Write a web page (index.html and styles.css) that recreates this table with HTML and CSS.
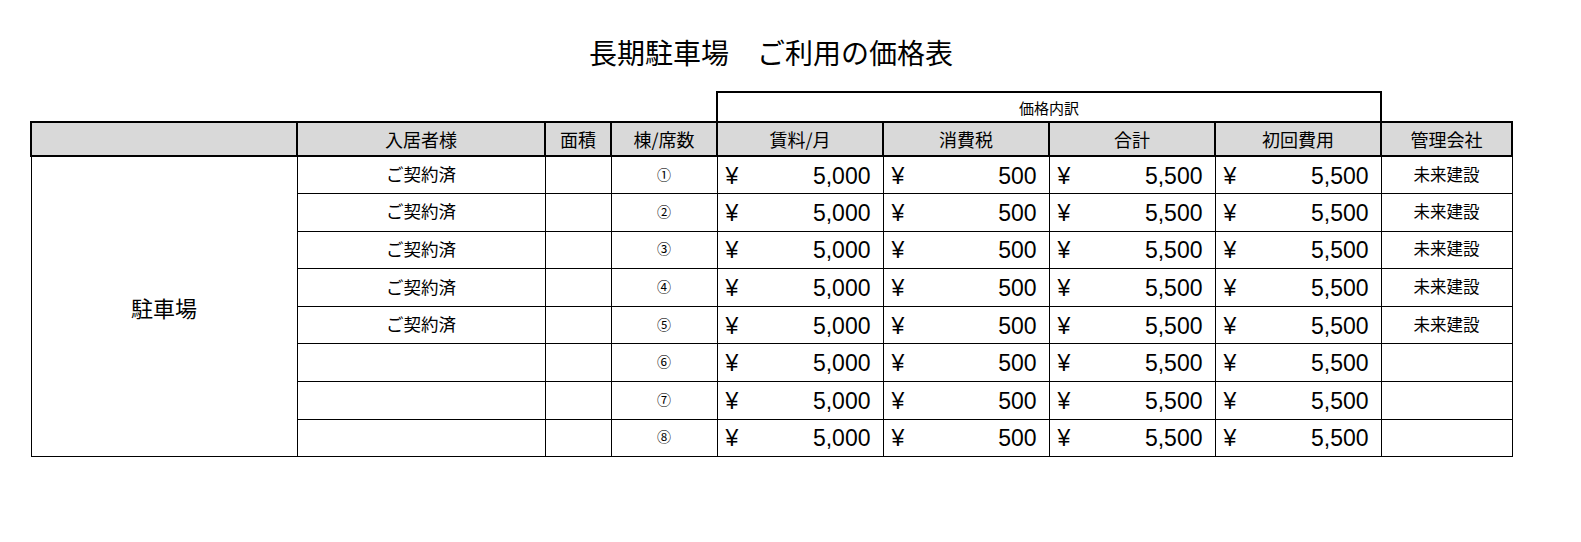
FILE: index.html
```html
<!DOCTYPE html>
<html lang="ja">
<head>
<meta charset="utf-8">
<title>長期駐車場　ご利用の価格表</title>
<link rel="stylesheet" href="styles.css">
</head>
<body>
<div class="page">
  <h1 class="title">長期駐車場　ご利用の価格表</h1>
  <table class="price-table">
    <colgroup>
      <col class="c-area">
      <col class="c-tenant">
      <col class="c-size">
      <col class="c-seat">
      <col class="c-money">
      <col class="c-money">
      <col class="c-money">
      <col class="c-money">
      <col class="c-company">
    </colgroup>
    <tr class="row-group">
      <td class="blank" colspan="4"></td>
      <td class="group" colspan="4">価格内訳</td>
      <td class="blank"></td>
    </tr>
    <tr class="row-head">
      <th></th>
      <th>入居者様</th>
      <th>面積</th>
      <th>棟/席数</th>
      <th>賃料/月</th>
      <th>消費税</th>
      <th>合計</th>
      <th>初回費用</th>
      <th>管理会社</th>
    </tr>
    <tr>
      <td class="area" rowspan="8">駐車場</td>
      <td class="tenant">ご契約済</td><td></td><td class="seat">①</td>
      <td class="money"><div class="m"><span>¥</span><span>5,000</span></div></td>
      <td class="money"><div class="m"><span>¥</span><span>500</span></div></td>
      <td class="money"><div class="m"><span>¥</span><span>5,500</span></div></td>
      <td class="money"><div class="m"><span>¥</span><span>5,500</span></div></td>
      <td class="company">未来建設</td>
    </tr>
    <tr>
      <td class="tenant">ご契約済</td><td></td><td class="seat">②</td>
      <td class="money"><div class="m"><span>¥</span><span>5,000</span></div></td>
      <td class="money"><div class="m"><span>¥</span><span>500</span></div></td>
      <td class="money"><div class="m"><span>¥</span><span>5,500</span></div></td>
      <td class="money"><div class="m"><span>¥</span><span>5,500</span></div></td>
      <td class="company">未来建設</td>
    </tr>
    <tr>
      <td class="tenant">ご契約済</td><td></td><td class="seat">③</td>
      <td class="money"><div class="m"><span>¥</span><span>5,000</span></div></td>
      <td class="money"><div class="m"><span>¥</span><span>500</span></div></td>
      <td class="money"><div class="m"><span>¥</span><span>5,500</span></div></td>
      <td class="money"><div class="m"><span>¥</span><span>5,500</span></div></td>
      <td class="company">未来建設</td>
    </tr>
    <tr>
      <td class="tenant">ご契約済</td><td></td><td class="seat">④</td>
      <td class="money"><div class="m"><span>¥</span><span>5,000</span></div></td>
      <td class="money"><div class="m"><span>¥</span><span>500</span></div></td>
      <td class="money"><div class="m"><span>¥</span><span>5,500</span></div></td>
      <td class="money"><div class="m"><span>¥</span><span>5,500</span></div></td>
      <td class="company">未来建設</td>
    </tr>
    <tr>
      <td class="tenant">ご契約済</td><td></td><td class="seat">⑤</td>
      <td class="money"><div class="m"><span>¥</span><span>5,000</span></div></td>
      <td class="money"><div class="m"><span>¥</span><span>500</span></div></td>
      <td class="money"><div class="m"><span>¥</span><span>5,500</span></div></td>
      <td class="money"><div class="m"><span>¥</span><span>5,500</span></div></td>
      <td class="company">未来建設</td>
    </tr>
    <tr>
      <td class="tenant"></td><td></td><td class="seat">⑥</td>
      <td class="money"><div class="m"><span>¥</span><span>5,000</span></div></td>
      <td class="money"><div class="m"><span>¥</span><span>500</span></div></td>
      <td class="money"><div class="m"><span>¥</span><span>5,500</span></div></td>
      <td class="money"><div class="m"><span>¥</span><span>5,500</span></div></td>
      <td class="company"></td>
    </tr>
    <tr>
      <td class="tenant"></td><td></td><td class="seat">⑦</td>
      <td class="money"><div class="m"><span>¥</span><span>5,000</span></div></td>
      <td class="money"><div class="m"><span>¥</span><span>500</span></div></td>
      <td class="money"><div class="m"><span>¥</span><span>5,500</span></div></td>
      <td class="money"><div class="m"><span>¥</span><span>5,500</span></div></td>
      <td class="company"></td>
    </tr>
    <tr>
      <td class="tenant"></td><td></td><td class="seat">⑧</td>
      <td class="money"><div class="m"><span>¥</span><span>5,000</span></div></td>
      <td class="money"><div class="m"><span>¥</span><span>500</span></div></td>
      <td class="money"><div class="m"><span>¥</span><span>5,500</span></div></td>
      <td class="money"><div class="m"><span>¥</span><span>5,500</span></div></td>
      <td class="company"></td>
    </tr>
  </table>
</div>
</body>
</html>
```

FILE: styles.css
```css
html, body {
  margin: 0;
  padding: 0;
  background: #ffffff;
}

body {
  font-family: "Noto Sans CJK JP", "Liberation Sans", sans-serif;
  color: #000;
}

.page {
  padding: 34px 0 0 30px;
  width: 1482px;
}

.title {
  margin: 0 0 21px 0;
  font-size: 28px;
  line-height: 36px;
  font-weight: 400;
  text-align: center;
  letter-spacing: 0;
}

.price-table {
  border-collapse: collapse;
  table-layout: fixed;
  width: 1481px;
}

.c-area { width: 266px; }
.c-tenant { width: 248px; }
.c-size { width: 66px; }
.c-seat { width: 106px; }
.c-money { width: 166px; }
.c-company { width: 131px; }

.price-table td,
.price-table th {
  padding: 0;
  border: 1px solid #000;
  text-align: center;
  vertical-align: middle;
  font-weight: 400;
}

.price-table .blank {
  border: none;
}

.price-table .group {
  border: 2px solid #000;
  font-size: 15px;
}

.price-table th {
  border: 2px solid #000;
  background: #d9d9d9;
  font-size: 18px;
}

.price-table tr {
  height: 37.6px;
}

.price-table .row-group { height: 30px; }
.price-table .row-head { height: 34px; }

.area {
  font-size: 22px;
}

.price-table .tenant,
.price-table .seat,
.price-table .company {
  padding-bottom: 3px;
}

.tenant {
  font-size: 17.5px;
}

.seat {
  font-size: 14px;
}

.company {
  font-size: 16.5px;
}

.money {
  font-family: "Liberation Sans", Arial, sans-serif;
  font-size: 23px;
}

.m {
  display: flex;
  justify-content: space-between;
  align-items: center;
  padding: 2px 12px 0 8px;
}
```
